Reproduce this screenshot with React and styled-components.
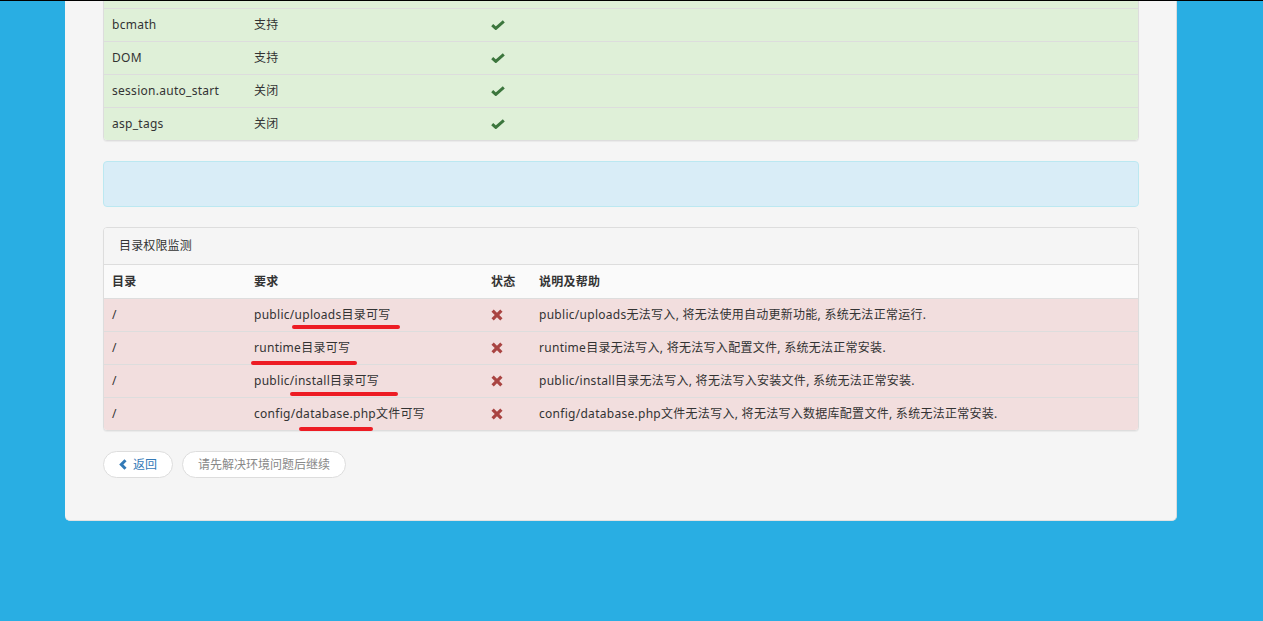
import React from "react";
import styled, { createGlobalStyle } from "styled-components";

const GlobalStyle = createGlobalStyle`
  html, body { margin: 0; padding: 0; }
  body {
    background: #29aee3;
    font-family: "Noto Sans", "Noto Sans CJK SC", "Liberation Sans", sans-serif;
    font-size: 12px;
    color: #333;
    overflow: hidden;
  }
  * { box-sizing: border-box; }
`;

const TopRule = styled.div`
  height: 1px;
  background: #000;
`;

const Container = styled.div`
  width: 1112px;
  margin-left: 65px;
  background: #f5f5f5;
  border-right: 1px solid #dcdcdc;
  border-bottom: 1px solid #e2e2e2;
  border-radius: 0 0 5px 5px;
  padding: 0 37px 42px 38px;
  overflow: hidden;
`;

const Panel = styled.div`
  background: #fff;
  border: 1px solid #ddd;
  border-radius: 4px;
  box-shadow: 0 1px 1px rgba(0, 0, 0, 0.05);
  margin-top: ${(p) => p.$offset || 0}px;
  margin-bottom: 20px;
`;

const PanelHeading = styled.div`
  background: #f5f5f5;
  border-bottom: 1px solid #ddd;
  border-radius: 3px 3px 0 0;
  padding: 10px 15px;
  line-height: 16px;
  letter-spacing: 0.15px;
`;

const Row = styled.div`
  display: grid;
  grid-template-columns: 142px 237px 48px 1fr;
  background: ${(p) => p.$bg};
  border-top: ${(p) => (p.$first ? "none" : "1px solid #ddd")};
  font-weight: ${(p) => (p.$head ? 700 : 400)};
  &:last-child {
    border-radius: 0 0 3px 3px;
  }
`;

const Cell = styled.div`
  position: relative;
  min-height: 32px;
  padding: 8px;
  line-height: ${(p) => (p.$head ? "17px" : "16px")};
  letter-spacing: 0.28px;
  white-space: nowrap;
`;

const IconCell = styled(Cell)`
  display: flex;
  align-items: center;
`;

const Mark = styled.span`
  position: absolute;
  left: ${(p) => p.$l}px;
  top: ${(p) => p.$t}px;
  width: ${(p) => p.$w}px;
  height: 4px;
  background: #ed1c24;
  border-radius: 3px;
`;

const Alert = styled.div`
  height: 46px;
  background: #d9edf7;
  border: 1px solid #bce8f1;
  border-radius: 4px;
  margin-bottom: 20px;
`;

const Actions = styled.div`
  display: flex;
  gap: 9px;
`;

const Button = styled.button`
  display: inline-flex;
  align-items: center;
  gap: 6px;
  height: 27px;
  padding: 0 15px;
  border: 1px solid #ddd;
  border-radius: 14px;
  background: #fff;
  font-family: inherit;
  font-size: 12px;
  line-height: 17px;
  color: ${(p) => (p.$primary ? "#337ab7" : "#888")};
  cursor: ${(p) => (p.$disabled ? "not-allowed" : "pointer")};
`;

const Check = () => (
  <svg width="14" height="10" viewBox="0 0 14 10">
    <path d="M1.2 5.2 L4.8 8.4 L12.8 1.4" fill="none" stroke="#3c763d" strokeWidth="3" strokeLinejoin="miter" />
  </svg>
);

const Cross = () => (
  <svg width="12" height="12" viewBox="0 0 12 12">
    <path d="M1.6 1.6 L10.4 10.4 M10.4 1.6 L1.6 10.4" fill="none" stroke="#a94442" strokeWidth="3.2" />
  </svg>
);

const ChevronLeft = () => (
  <svg width="8" height="11" viewBox="0 0 8 11">
    <path d="M6.5 1.2 L2.3 5.5 L6.5 9.8" fill="none" stroke="#337ab7" strokeWidth="3" />
  </svg>
);

const envRows = [
  ["bcmath", "支持"],
  ["DOM", "支持"],
  ["session.auto_start", "关闭"],
  ["asp_tags", "关闭"],
];

const dirRows = [
  {
    req: "public/uploads目录可写",
    help: "public/uploads无法写入, 将无法使用自动更新功能, 系统无法正常运行.",
    mark: { l: 46, t: 26, w: 108 },
  },
  {
    req: "runtime目录可写",
    help: "runtime目录无法写入, 将无法写入配置文件, 系统无法正常安装.",
    mark: { l: 5, t: 29, w: 106 },
  },
  {
    req: "public/install目录可写",
    help: "public/install目录无法写入, 将无法写入安装文件, 系统无法正常安装.",
    mark: { l: 44, t: 27, w: 108 },
  },
  {
    req: "config/database.php文件可写",
    help: "config/database.php文件无法写入, 将无法写入数据库配置文件, 系统无法正常安装.",
    mark: { l: 53, t: 29, w: 74 },
  },
];

export default function App() {
  return (
    <>
      <GlobalStyle />
      <TopRule />
      <Container>
        <Panel $offset={-26}>
          <Row $bg="#dff0d8" $first aria-hidden="true">
            <Cell />
            <Cell />
            <Cell />
            <Cell />
          </Row>
          {envRows.map(([name, val]) => (
            <Row key={name} $bg="#dff0d8">
              <Cell>{name}</Cell>
              <Cell>{val}</Cell>
              <IconCell>
                <Check />
              </IconCell>
              <Cell />
            </Row>
          ))}
        </Panel>

        <Alert />

        <Panel>
          <PanelHeading>目录权限监测</PanelHeading>
          <Row $bg="#fafafa" $first $head>
            <Cell $head>目录</Cell>
            <Cell $head>要求</Cell>
            <Cell $head>状态</Cell>
            <Cell $head>说明及帮助</Cell>
          </Row>
          {dirRows.map((r) => (
            <Row key={r.req} $bg="#f2dede">
              <Cell>/</Cell>
              <Cell>
                {r.req}
                <Mark $l={r.mark.l} $t={r.mark.t} $w={r.mark.w} />
              </Cell>
              <IconCell>
                <Cross />
              </IconCell>
              <Cell>{r.help}</Cell>
            </Row>
          ))}
        </Panel>

        <Actions>
          <Button $primary>
            <ChevronLeft />
            返回
          </Button>
          <Button $disabled>请先解决环境问题后继续</Button>
        </Actions>
      </Container>
    </>
  );
}
